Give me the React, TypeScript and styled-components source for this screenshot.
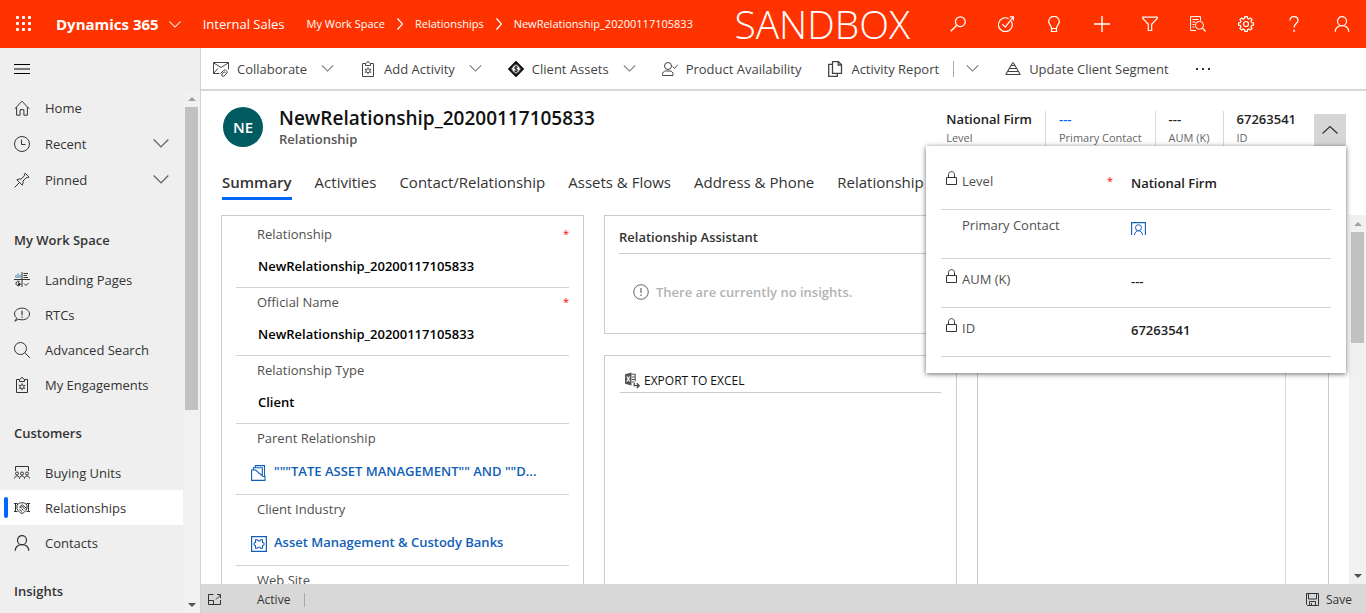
import React from "react";
import styled, { createGlobalStyle, css } from "styled-components";

const GlobalStyle = createGlobalStyle`
  *, *::before, *::after { box-sizing: border-box; }
  html, body, #root { height: 100%; }
  body {
    margin: 0;
    font-family: "Open Sans", "Noto Sans", sans-serif;
    font-size: 13px;
    line-height: 20px;
    color: #333;
    background: #fff;
  }
  button, input, select { font: inherit; color: inherit; }
  button { border: 0; padding: 0; background: none; cursor: pointer; }
  a { color: inherit; text-decoration: none; }
  ul { list-style: none; margin: 0; padding: 0; }
  h1, h2, p, dl, dd { margin: 0; font-size: inherit; font-weight: inherit; }
`;

/* ---------- icons ---------- */

const Svg = styled.svg`
  display: block;
  flex: none;
  fill: none;
  stroke: currentColor;
  stroke-width: 1;
`;

const gearPath = (cx: number, cy: number, r1: number, r2: number, teeth: number) => {
  const pts: string[] = [];
  const step = (Math.PI * 2) / teeth;
  for (let i = 0; i < teeth; i++) {
    const a = i * step;
    [
      [a - step * 0.32, r1],
      [a - step * 0.2, r2],
      [a + step * 0.2, r2],
      [a + step * 0.32, r1],
    ].forEach(([t, r]) => pts.push(`${(cx + r * Math.sin(t)).toFixed(2)} ${(cy - r * Math.cos(t)).toFixed(2)}`));
  }
  return `M${pts.join("L")}Z`;
};

const shapes = {
  search: (
    <>
      <circle cx="10.3" cy="5.7" r="4.9" strokeWidth="1.2" />
      <path d="M6.8 9.2L.7 15.3" strokeWidth="1.3" />
    </>
  ),
  target: (
    <>
      <path d="M13.3 5.2A6.9 6.9 0 1 1 10.6 2.6" strokeWidth="1.2" />
      <path d="M4.3 8.2l2.9 2.9L15 1.3M11.8.8h3.6v3.6" strokeWidth="1.2" />
    </>
  ),
  bulb: (
    <path d="M5.5 12.2C5.5 9.6 2.7 8.700 2.700 5.600a5.300 5.300 0 0 1 10.600 0c0 3.100-2.800 4-2.800 6.600M5.500 12.500h5v3h-5z" strokeWidth="1.2" />
  ),
  plus: <path d="M8 0v16M0 8h16" strokeWidth="1.400" />,
  filter: <path d="M.8 1.100h14.400v1.400L9.700 8.300v6.200H6.300V8.300L.8 2.500z" strokeWidth="1.200" />,
  docSearch: (
    <>
      <path d="M6 14.500H.6V.6h9.900v4M2.500 3.500h6M2.500 6h3M2.500 8.500h2M2.500 11h2" />
      <circle cx="9.500" cy="9.300" r="4" />
      <path d="M12.400 12.200l3.300 3.400" strokeWidth="1.200" />
    </>
  ),
  gear: (
    <>
      <path d={gearPath(8, 8, 5.8, 7.5, 8)} strokeWidth="1.200" />
      <circle cx="8" cy="8" r="2.500" strokeWidth="1.200" />
    </>
  ),
  help: (
    <>
      <path d="M4 4.600C4 2.200 5.700.7 8 .7s4 1.500 4 3.700c0 3-3.900 3.300-3.900 7" strokeWidth="1.300" />
      <path d="M8.100 13.800v2" strokeWidth="1.500" />
    </>
  ),
  person: (
    <>
      <circle cx="8" cy="5.200" r="4.500" strokeWidth="1.200" />
      <path d="M1.200 15.800C1.500 12 4.300 9.700 8 9.700s6.500 2.300 6.800 6.100" strokeWidth="1.200" />
    </>
  ),
  home: <path d="M.8 8.800L8 1.200l7.200 7.600M2.600 7.200v8h3.500v-5.500h3.800v5.500h3.500v-8" />,
  clock: (
    <>
      <circle cx="8" cy="8" r="7.500" />
      <path d="M7.500 3.500v5h4" />
    </>
  ),
  pin: <path d="M.5 15.500l5-5M2.700 7.600l5.700 5.700M3 8c1.400-1.100 2.700-1.300 4-.8l3.400-3.300c-.2-1 0-1.900.6-2.800l4 4c-.9.600-1.800.8-2.800.6L8.900 9.100c.5 1.300.2 2.600-.8 4" />,
  landing: (
    <>
      <path d="M0 7.500h16M8 0v15" />
      <path d="M2 6V3M4 6V1.500M6 6V2.500" stroke="#5a8fb8" strokeWidth="1.200" />
      <path d="M9.500 1.500H14M9.500 3.500h3.500M9.500 5.500H14M5.500 9.500a2.300 2.300 0 1 0 .8 3M10 11.500l2 2 2.500-2.500" />
      <path d="M4 10.500l2 1.500-2 1" strokeWidth="1.500" />
    </>
  ),
  chat: (
    <>
      <path d="M2.800 11.200A5.600 5.600 0 0 1 .5 7C.5 3.600 3.900 1.200 8 1.200S15.500 3.600 15.500 7s-3.400 5.800-7.500 5.800c-1.400 0-2.600-.2-3.700-.6L.8 14.200z" />
      <path d="M8 3.800v4.500M8 9.500v1.300" strokeWidth="1.200" />
    </>
  ),
  lens: (
    <>
      <circle cx="6.500" cy="6.500" r="6" />
      <path d="M10.800 10.800l5 5" />
    </>
  ),
  clipboard: (
    <>
      <path d="M5.500 2.500H2.500v13h11v-13h-3M5.500 4.500v-2c1.500 0 1-2 2.500-2s1 2 2.500 2v2z" />
      <circle cx="8" cy="9.800" r="2" />
      <path d="M8 6.300v1.500M8 11.800v1.500M4.800 8l1.400.8M9.800 10.800l1.400.8M4.800 11.600l1.400-.8M9.800 8.800l1.400-.8" />
    </>
  ),
  audience: (
    <>
      <path d="M1.500 6V1.500h13V6" />
      <circle cx="3" cy="8.500" r="1.500" />
      <circle cx="8" cy="8.500" r="1.500" />
      <circle cx="13" cy="8.500" r="1.500" />
      <path d="M.5 13.500c0-3.400 5-3.400 5 0c0-3.400 5-3.400 5 0c0-3.400 5-3.400 5 0" />
    </>
  ),
  handshake: (
    <>
      <path d="M0 3.500h3.500M0 11.500h3.500M16 3.500h-3.500M16 11.500h-3.500M1.500 3.500v8M14.500 3.500v8" />
      <path d="M3 5C5.500 2 10.500 2 13 5v3.500c-1.500 3-3.200 4.500-5 4.800C6 13 4.500 11.500 3 8.500z" />
      <path d="M5.500 7l2.700-2.200L13 8.700M5.500 7c.9 1 1.900.6 2.800-.6L11 9.500M5.500 9.500l2.500 2M7.500 8.500l2 2" />
    </>
  ),
  envelope: (
    <>
      <path d="M6.500 12.500h-6v-11h15v7M.5 1.800L8 6.500l7.500-4.700M.5 12.500l4.300-5" />
      <path d="M7.500 12.500l3-3c1.800-1.700 4.800.8 3.200 2.700L11.200 15c-1.500 1.200-3.300-.5-2.200-2l1.800-2c.8-.6 1.700.3 1.200 1" />
    </>
  ),
  coin: (
    <>
      <path d="M8 1.200L14.600 8 8 14.800 1.400 8z" strokeWidth="2.200" stroke="#111" />
      <circle cx="8" cy="8" r="4.300" stroke="#333" />
      <path d="M9.800 6.500C9.300 5.600 6.500 5.500 6.500 7S9.800 7.700 9.800 9.300 6.700 10.800 6.200 9.700M8 4.800v6.500" stroke="#111" />
    </>
  ),
  personCheck: (
    <>
      <circle cx="6" cy="5" r="3.500" />
      <path d="M.5 14.500v-1c0-2 1.300-3.500 3-3.500h4.500c1.700 0 3 1.500 3 3.500v1zM10.500 5.500l1.800 1.800L15.700 4" />
    </>
  ),
  copy: (
    <>
      <path d="M5.500.7h6l3 3v8.600h-9z" strokeWidth="1.300" />
      <path d="M11.200.7v3.300h3.300M5.500 3.300h-3.800v12h8.600v-3" strokeWidth="1.300" />
    </>
  ),
  pyramid: <path d="M8 1v2M6 4.500h4M4.500 7.500h7M3 10.500h10M.5 13.500h15M7.200 2.500L.8 13.500M8.800 2.500l6.400 11" strokeWidth="1.100" />,
  lock: <path d="M.5 6.500h10v7h-10zM2.500 6.500V3.700C2.500 1.800 3.800.6 5.500.6s3 1.200 3 3.100v2.800" />,
  folder: (
    <path d="M.6 15.400V5h3.900l7.500 6.500h2v3.900zM2.500 5V2.700h8.800V11M4.300 2.700V.6h9.200v10.900" strokeWidth="1.100" />
  ),
  puzzle: (
    <>
      <path d="M.6.6h14.800v14.800H.6z" strokeWidth="1.200" />
      <path d="M4.500 3.800h2c0 1.700 3 1.700 3 0h2v2.700c2.200 0 2.200 3 0 3v2.700h-2c0-1.700-3-1.700-3 0h-2V9.500c-2.200 0-2.200-3 0-3z" strokeWidth="1.100" />
    </>
  ),
  contactCard: (
    <>
      <path d="M.6 13V.6h13.800V13" strokeWidth="1.100" />
      <circle cx="7.500" cy="5.700" r="3" />
      <path d="M3.500 13c.2-2.500 1.800-4.300 4-4.300s3.800 1.800 4 4.300" />
    </>
  ),
  info: (
    <>
      <circle cx="8" cy="8" r="7.300" />
      <path d="M8 4v5M8 10.500V12" strokeWidth="1.200" />
    </>
  ),
  excel: (
    <>
      <path d="M0 2.300L6.500.5v13L0 11.700z" fill="#555" stroke="none" />
      <path d="M6.500 2.300h3.700v7M7 5h3M7 7.500h3M7 10h2.500" stroke="#555" strokeWidth="1.100" />
      <path d="M1.800 4.500l3 5M4.800 4.500l-3 5" stroke="#fff" strokeWidth="1.200" />
      <path d="M9.200 11v2.700h4.500M11.700 11.200l2.500 2.500-2.500 2.400" stroke="#444" strokeWidth="1.300" />
    </>
  ),
  popout: <path d="M5.500 1.500h-5v10h12v-4.500M.5 7.500h5v4M8 6.500L12.500 2M9 1.500h3.500v3.800" />,
  save: <path d="M.5.5h12v12h-11l-1-1zM2.500.5v5.500h8V.5M3.500 12.500v-4h6v4M5.500 10v2.500" />,
} as const;

type IconName = keyof typeof shapes;

const Icon = ({ name, w = 16, h = 16 }: { name: IconName; w?: number; h?: number }) => (
  <Svg width={w} height={h} viewBox={`0 0 ${w} ${h}`} aria-hidden="true">
    {shapes[name]}
  </Svg>
);

const chevrons = {
  down: "M.5.5L7 7 13.500.5",
  up: "M.5 7.500L8 .5l7.500 7",
  right: "M.5.5L5.500 6 .5 11.500",
};

const Chevron = ({ dir = "down", w = 14, h = 8 }: { dir?: keyof typeof chevrons; w?: number; h?: number }) => (
  <Svg width={w} height={h} viewBox={dir === "down" ? "0 0 14 8" : `0 0 ${w} ${h}`} aria-hidden="true">
    <path d={chevrons[dir]} strokeWidth="1.200" />
  </Svg>
);

/* ---------- top bar ---------- */

const Shell = styled.div`
  display: grid;
  grid-template: 48px minmax(0, 1fr) / 201px minmax(0, 1fr);
  height: 100vh;
  overflow: hidden;
`;

const TopBar = styled.header`
  grid-column: 1 / -1;
  display: flex;
  align-items: center;
  background: #ff3300;
  color: #fff;
  white-space: nowrap;
`;

const Waffle = styled.button`
  width: 56px;
  height: 48px;
  padding-left: 16px;
`;

const Brand = styled.button`
  display: flex;
  align-items: center;
  gap: 10px;
  font-size: 15px;
  font-weight: 700;
`;

const AreaName = styled.a`
  margin: 0 22px;
`;

const Crumbs = styled.nav`
  display: flex;
  align-items: center;
  gap: 12px;
  font-size: 11px;
`;

const EnvLabel = styled.span`
  margin: 0 24px 0 auto;
  font-size: 39px;
  font-weight: 300;
  line-height: 48px;
`;

const TopActions = styled.div`
  display: flex;
`;

const TopAction = styled.button`
  display: grid;
  place-items: center;
  width: 48px;
  height: 48px;
`;

/* ---------- side navigation ---------- */

const Sidebar = styled.nav`
  display: flex;
  flex-direction: column;
  min-height: 0;
  background: #efefef;
  border-right: 1px solid #d2d2d2;
`;

const MenuToggle = styled.button`
  flex: none;
  height: 42px;
  padding-left: 14px;
  color: #000;
`;

const NavScroll = styled.div`
  display: flex;
  flex: 1;
  min-height: 0;
`;

const NavBody = styled.div`
  flex: 1;
  overflow: hidden;
`;

const PrimaryNav = styled.ul`
  display: flex;
  flex-direction: column;
  gap: 1px;
  margin-bottom: 12px;
`;

const NavHeading = styled.h2`
  height: 53px;
  padding: 21px 14px 0;
  font-weight: 600;
`;

const NavLink = styled.a<{ $active?: boolean }>`
  display: flex;
  align-items: center;
  gap: 15px;
  height: 35px;
  padding: 0 14px;
  ${(p) =>
    p.$active &&
    css`
      background: #fff;
      padding-left: 0;
      &::before {
        content: "";
        width: 4px;
        height: 21px;
        margin: 0 -9px 0 4px;
        border-radius: 2px;
        background: #0066ff;
      }
    `}
`;

const NavToggle = styled.span`
  margin-left: auto;
  color: #5a6870;
`;

/* ---------- scroll rails ---------- */

const Rail = styled.div`
  flex: none;
  display: flex;
  flex-direction: column;
  align-items: center;
  width: 17px;
  background: #f1f1f1;
`;

const RailArrow = styled.span<{ $up?: boolean }>`
  flex: none;
  display: grid;
  place-items: center;
  height: 17px;
  &::before {
    content: "";
    border: 4px solid transparent;
    ${(p) =>
      p.$up
        ? css`border-top: 0; border-bottom-color: #a0a0a0;`
        : css`border-bottom: 0; border-top-color: #505050;`}
  }
`;

const RailTrack = styled.div`
  flex: 1;
`;

const RailThumb = styled.div<{ $size: string }>`
  width: 13px;
  height: ${(p) => p.$size};
  background: #c1c1c1;
`;

const ScrollRail = ({ size }: { size: string }) => (
  <Rail aria-hidden="true">
    <RailArrow $up />
    <RailTrack>
      <RailThumb $size={size} />
    </RailTrack>
    <RailArrow />
  </Rail>
);

/* ---------- command bar ---------- */

const Main = styled.main`
  display: flex;
  flex-direction: column;
  min-width: 0;
  min-height: 0;
`;

const CommandBar = styled.div`
  flex: none;
  display: flex;
  align-items: center;
  gap: 26px;
  height: 43px;
  padding-left: 12px;
  border-bottom: 2px solid #d8d8d8;
  white-space: nowrap;
`;

const Command = styled.button`
  display: flex;
  align-items: center;
  gap: 8px;
  color: #444;
`;

const CommandChevron = styled.span<{ $split?: boolean }>`
  display: flex;
  align-items: center;
  height: 16px;
  margin-left: 6px;
  color: #777;
  ${(p) =>
    p.$split &&
    css`
      padding-left: 12px;
      border-left: 1px solid #aaa;
    `}
`;

const More = styled.button`
  height: 20px;
  color: #333;
`;

/* ---------- record header ---------- */

const RecordHeader = styled.header`
  position: relative;
  flex: none;
  display: flex;
  align-items: flex-start;
  height: 72px;
  padding: 16px 20px 0 22px;
`;

const Avatar = styled.div`
  display: grid;
  place-items: center;
  width: 40px;
  height: 40px;
  margin-right: 16px;
  border-radius: 50%;
  background: #005b60;
  color: #fff;
  font-size: 15px;
  font-weight: 600;
`;

const RecordTitle = styled.h1`
  font-size: 19px;
  font-weight: 600;
  line-height: 22px;
  color: #111;
`;

const RecordType = styled.p`
  font-weight: 600;
  line-height: 20px;
  color: #555;
`;

const Stats = styled.dl`
  display: flex;
  margin-left: auto;
  padding-top: 4px;
`;

const Stat = styled.div`
  display: flex;
  flex-direction: column-reverse;
  justify-content: flex-end;
  height: 38px;
  padding: 0 13px;
  & + & {
    border-left: 1px solid #d8d8d8;
  }
`;

const StatLabel = styled.dt`
  font-size: 11px;
  line-height: 22px;
  color: #666;
`;

const StatValue = styled.dd<{ $link?: boolean }>`
  line-height: 16px;
  font-weight: 600;
  color: ${(p) => (p.$link ? "#0066ff" : "#222")};
`;

const Expander = styled.button`
  display: grid;
  place-items: center;
  width: 32px;
  height: 32px;
  margin: 7px 0 0 5px;
  background: #d6d6d6;
`;

const Flyout = styled.section`
  position: absolute;
  z-index: 2;
  top: 55px;
  right: 20px;
  width: 420px;
  padding: 15px 15px 16px;
  background: #fff;
  box-shadow: 0 1px 5px rgba(0, 0, 0, 0.6);
`;

const FlyoutRow = styled.div<{ $locked?: boolean }>`
  display: grid;
  grid-template-columns: 21px 145px 24px minmax(0, 1fr);
  align-items: start;
  height: 49px;
  padding: ${(p) => (p.$locked ? "10px" : "5px")} 0 0;
  border-bottom: 1px solid #d2d2d2;
`;

const LockSlot = styled.span`
  padding-left: 5px;
`;

const FlyoutLabel = styled.label`
  color: #505050;
`;

const Star = styled.span`
  color: #f00;
  font-size: 11px;
`;

const FlyoutValue = styled.div`
  padding-top: 2px;
`;

const FlyoutInput = styled.input`
  display: block;
  width: 100%;
  height: 20px;
  padding: 0;
  border: 0;
  outline: 0;
  background: none;
  font-weight: 600;
  color: #222;
`;

const LookupButton = styled.button`
  display: block;
  padding-top: 5px;
  color: #1160b7;
`;

/* ---------- tabs ---------- */

const Tabs = styled.div`
  flex: none;
  display: flex;
  gap: 23px;
  height: 52px;
  padding: 6px 21px 0;
  white-space: nowrap;
  overflow: hidden;
`;

const Tab = styled.button<{ $active?: boolean }>`
  height: 31px;
  padding-bottom: 2px;
  border-bottom: 3px solid ${(p) => (p.$active ? "#0066ff" : "transparent")};
  font-size: 15px;
  line-height: 26px;
  font-weight: ${(p) => (p.$active ? 600 : 400)};
`;

/* ---------- form ---------- */

const FormArea = styled.div`
  display: flex;
  flex: 1;
  min-height: 0;
`;

const Columns = styled.div`
  flex: 1;
  display: grid;
  grid-template-columns: 363fr 353fr 352fr;
  gap: 20px;
  min-width: 0;
  padding: 0 20px;
  overflow: hidden;
`;

const Column = styled.div`
  display: flex;
  flex-direction: column;
  gap: 21px;
  min-width: 0;
  min-height: 0;
`;

const Card = styled.section<{ $fill?: boolean; $top: number }>`
  padding: ${(p) => p.$top}px 14px 0;
  border: 1px solid #ccc;
  ${(p) =>
    p.$fill &&
    css`
      flex: 1;
      border-bottom: 0;
    `}
`;

const SideCard = styled(Card)`
  display: flex;
  padding: 0 42px 0 0;
`;

const SideInner = styled.div`
  flex: 1;
  border-right: 1px solid #d8d8d8;
`;

const Field = styled.div<{ $tall?: boolean }>`
  height: ${(p) => (p.$tall ? 71 : 68)}px;
  padding-top: 4px;
  border-bottom: 1px solid #d2d2d2;
`;

const FieldHead = styled.div`
  display: flex;
  justify-content: space-between;
  padding-left: 21px;
  color: #505050;
`;

const fieldControl = css`
  display: block;
  width: 100%;
  height: 24px;
  margin-top: 10px;
  padding: 0 0 0 22px;
  border: 0;
  outline: 0;
  background: none;
  appearance: none;
  font-weight: 600;
  color: #000;
`;

const TextInput = styled.input`
  ${fieldControl}
`;

const Choice = styled.select`
  ${fieldControl}
`;

const Lookup = styled.a`
  display: flex;
  gap: 7px;
  margin-top: 13px;
  padding: 0 15px;
  font-weight: 600;
  color: #1160b7;
  svg {
    margin-top: 4px;
  }
`;

const LookupText = styled.span`
  overflow: hidden;
  text-overflow: ellipsis;
  white-space: nowrap;
`;

const CardTitle = styled.h2`
  height: 27px;
  border-bottom: 1px solid #ccc;
  font-weight: 600;
`;

const EmptyNote = styled.p`
  display: flex;
  align-items: center;
  gap: 7px;
  height: 79px;
  padding: 0 0 4px 14px;
  color: #666;
  strong {
    color: #b3b3b3;
    font-weight: 600;
  }
`;

const Export = styled.button`
  display: flex;
  align-items: center;
  gap: 3px;
  width: 100%;
  height: 24px;
  padding-left: 6px;
  border-bottom: 1px solid #ccc;
  border-radius: 2px;
  font-size: 12px;
  color: #111;
`;

/* ---------- status bar ---------- */

const StatusBar = styled.footer`
  flex: none;
  display: flex;
  align-items: center;
  height: 29px;
  padding: 2px 14px 0 7px;
  background: #d8d8d8;
  font-size: 12px;
`;

const StatusIconButton = styled.button`
  width: 49px;
`;

const StatusText = styled.span`
  padding-right: 14px;
  border-right: 1px solid #aaa;
  line-height: 14px;
`;

const SaveButton = styled.button`
  display: flex;
  align-items: center;
  gap: 7px;
  margin-left: auto;
`;

/* ---------- data ---------- */

type NavEntry = { icon: IconName; label: string; toggle?: boolean; active?: boolean };

const primaryNav: NavEntry[] = [
  { icon: "home", label: "Home" },
  { icon: "clock", label: "Recent", toggle: true },
  { icon: "pin", label: "Pinned", toggle: true },
];

const navGroups: { title: string; items: NavEntry[] }[] = [
  {
    title: "My Work Space",
    items: [
      { icon: "landing", label: "Landing Pages" },
      { icon: "chat", label: "RTCs" },
      { icon: "lens", label: "Advanced Search" },
      { icon: "clipboard", label: "My Engagements" },
    ],
  },
  {
    title: "Customers",
    items: [
      { icon: "audience", label: "Buying Units" },
      { icon: "handshake", label: "Relationships", active: true },
      { icon: "person", label: "Contacts" },
    ],
  },
  { title: "Insights", items: [] },
];

const commands: { icon: IconName; label: string; menu?: "plain" | "split" }[] = [
  { icon: "envelope", label: "Collaborate", menu: "plain" },
  { icon: "clipboard", label: "Add Activity", menu: "plain" },
  { icon: "coin", label: "Client Assets", menu: "plain" },
  { icon: "personCheck", label: "Product Availability" },
  { icon: "copy", label: "Activity Report", menu: "split" },
  { icon: "pyramid", label: "Update Client Segment" },
];

const topActions: [IconName, string][] = [
  ["search", "Search"],
  ["target", "Task flow"],
  ["bulb", "Insights"],
  ["plus", "Quick create"],
  ["filter", "Advanced find"],
  ["docSearch", "Relevance search"],
  ["gear", "Settings"],
  ["help", "Help"],
  ["person", "Account"],
];

const stats = [
  { label: "Level", value: "National Firm" },
  { label: "Primary Contact", value: "---", link: true },
  { label: "AUM (K)", value: "---" },
  { label: "ID", value: "67263541" },
];

const tabs = [
  "Summary",
  "Activities",
  "Contact/Relationship",
  "Assets & Flows",
  "Address & Phone",
  "Relationship",
];

const NavItem = ({ icon, label, toggle, active }: NavEntry) => (
  <li>
    <NavLink href="#" $active={active}>
      <Icon name={icon} />
      {label}
      {toggle && (
        <NavToggle>
          <Chevron w={16} h={9} />
        </NavToggle>
      )}
    </NavLink>
  </li>
);

const Required = () => <Star aria-hidden="true">*</Star>;

export default function App() {
  return (
    <>
      <GlobalStyle />
      <Shell>
        <TopBar>
          <Waffle aria-label="App launcher">
            <Svg width="16" height="16" viewBox="0 0 16 16">
              {[1.5, 7.5, 13.5].map((y) =>
                [1.5, 7.5, 13.5].map((x) => (
                  <rect key={`${x}-${y}`} x={x - 1.5} y={y - 1.5} width="3" height="3" rx="1" fill="currentColor" stroke="none" />
                ))
              )}
            </Svg>
          </Waffle>
          <Brand>
            Dynamics 365
            <Chevron w={12} h={7} />
          </Brand>
          <AreaName href="#">Internal Sales</AreaName>
          <Crumbs>
            <a href="#">My Work Space</a>
            <Chevron dir="right" w={6} h={12} />
            <a href="#">Relationships</a>
            <Chevron dir="right" w={6} h={12} />
            <a href="#">NewRelationship_20200117105833</a>
          </Crumbs>
          <EnvLabel>SANDBOX</EnvLabel>
          <TopActions>
            {topActions.map(([icon, label]) => (
              <TopAction key={icon} aria-label={label}>
                <Icon name={icon} />
              </TopAction>
            ))}
          </TopActions>
        </TopBar>

        <Sidebar>
          <MenuToggle aria-label="Toggle navigation">
            <Svg width="16" height="10" viewBox="0 0 16 10">
              <path d="M0 .5h16M0 5h16M0 9.500h16" />
            </Svg>
          </MenuToggle>
          <NavScroll>
            <NavBody>
              <PrimaryNav>
                {primaryNav.map((entry) => (
                  <NavItem key={entry.label} {...entry} />
                ))}
              </PrimaryNav>
              {navGroups.map((group) => (
                <React.Fragment key={group.title}>
                  <NavHeading>{group.title}</NavHeading>
                  <ul>
                    {group.items.map((entry) => (
                      <NavItem key={entry.label} {...entry} />
                    ))}
                  </ul>
                </React.Fragment>
              ))}
            </NavBody>
            <ScrollRail size="62%" />
          </NavScroll>
        </Sidebar>

        <Main>
          <CommandBar>
            {commands.map(({ icon, label, menu }) => (
              <Command key={label}>
                <Icon name={icon} />
                {label}
                {menu && (
                  <CommandChevron $split={menu === "split"}>
                    <Chevron w={13} h={7} />
                  </CommandChevron>
                )}
              </Command>
            ))}
            <More aria-label="More commands">
              <Svg width="16" height="2" viewBox="0 0 16 2">
                <path d="M1 1h2M7 1h2M13 1h2" strokeWidth="2" />
              </Svg>
            </More>
          </CommandBar>

          <RecordHeader>
            <Avatar>NE</Avatar>
            <div>
              <RecordTitle>NewRelationship_20200117105833</RecordTitle>
              <RecordType>Relationship</RecordType>
            </div>
            <Stats>
              {stats.map(({ label, value, link }) => (
                <Stat key={label}>
                  <StatLabel>{label}</StatLabel>
                  <StatValue $link={link}>{value}</StatValue>
                </Stat>
              ))}
            </Stats>
            <Expander aria-label="Collapse header">
              <Chevron dir="up" w={16} h={9} />
            </Expander>
            <Flyout>
              <FlyoutRow $locked>
                <LockSlot><Icon name="lock" w={11} h={14} /></LockSlot>
                <FlyoutLabel htmlFor="level">Level</FlyoutLabel>
                <Required />
                <FlyoutValue><FlyoutInput id="level" readOnly value="National Firm" /></FlyoutValue>
              </FlyoutRow>
              <FlyoutRow>
                <LockSlot />
                <FlyoutLabel htmlFor="contact">Primary Contact</FlyoutLabel>
                <span />
                <FlyoutValue>
                  <LookupButton id="contact" aria-label="Primary Contact">
                    <Icon name="contactCard" w={15} h={14} />
                  </LookupButton>
                </FlyoutValue>
              </FlyoutRow>
              <FlyoutRow $locked>
                <LockSlot><Icon name="lock" w={11} h={14} /></LockSlot>
                <FlyoutLabel htmlFor="aum">AUM (K)</FlyoutLabel>
                <span />
                <FlyoutValue><FlyoutInput id="aum" readOnly value="---" /></FlyoutValue>
              </FlyoutRow>
              <FlyoutRow $locked>
                <LockSlot><Icon name="lock" w={11} h={14} /></LockSlot>
                <FlyoutLabel htmlFor="rid">ID</FlyoutLabel>
                <span />
                <FlyoutValue><FlyoutInput id="rid" readOnly value="67263541" /></FlyoutValue>
              </FlyoutRow>
            </Flyout>
          </RecordHeader>

          <Tabs role="tablist">
            {tabs.map((tab, i) => (
              <Tab key={tab} role="tab" aria-selected={i === 0} $active={i === 0}>
                {tab}
              </Tab>
            ))}
          </Tabs>

          <FormArea>
            <Columns>
              <Column>
                <Card $fill $top={4}>
                  <Field>
                    <FieldHead><label htmlFor="relationship">Relationship</label><Required /></FieldHead>
                    <TextInput id="relationship" defaultValue="NewRelationship_20200117105833" />
                  </Field>
                  <Field>
                    <FieldHead><label htmlFor="official">Official Name</label><Required /></FieldHead>
                    <TextInput id="official" defaultValue="NewRelationship_20200117105833" />
                  </Field>
                  <Field>
                    <FieldHead><label htmlFor="type">Relationship Type</label></FieldHead>
                    <Choice id="type" defaultValue="Client"><option>Client</option></Choice>
                  </Field>
                  <Field $tall>
                    <FieldHead>Parent Relationship</FieldHead>
                    <Lookup href="#">
                      <Icon name="folder" />
                      <LookupText>"""TATE ASSET MANAGEMENT"" AND ""D...</LookupText>
                    </Lookup>
                  </Field>
                  <Field $tall>
                    <FieldHead>Client Industry</FieldHead>
                    <Lookup href="#">
                      <Icon name="puzzle" />
                      <LookupText>Asset Management &amp; Custody Banks</LookupText>
                    </Lookup>
                  </Field>
                  <Field>
                    <FieldHead><label htmlFor="site">Web Site</label></FieldHead>
                    <TextInput id="site" />
                  </Field>
                </Card>
              </Column>
              <Column>
                <Card $top={11}>
                  <CardTitle>Relationship Assistant</CardTitle>
                  <EmptyNote>
                    <Icon name="info" />
                    <strong>There are currently no insights.</strong>
                  </EmptyNote>
                </Card>
                <Card $fill $top={13}>
                  <Export>
                    <Icon name="excel" w={16} h={17} />
                    EXPORT TO EXCEL
                  </Export>
                </Card>
              </Column>
              <Column>
                <SideCard $fill $top={0}>
                  <SideInner />
                </SideCard>
              </Column>
            </Columns>
            <ScrollRail size="33%" />
          </FormArea>

          <StatusBar>
            <StatusIconButton aria-label="Open in new window">
              <Icon name="popout" w={13} h={13} />
            </StatusIconButton>
            <StatusText>Active</StatusText>
            <SaveButton>
              <Icon name="save" w={13} h={13} />
              Save
            </SaveButton>
          </StatusBar>
        </Main>
      </Shell>
    </>
  );
}
